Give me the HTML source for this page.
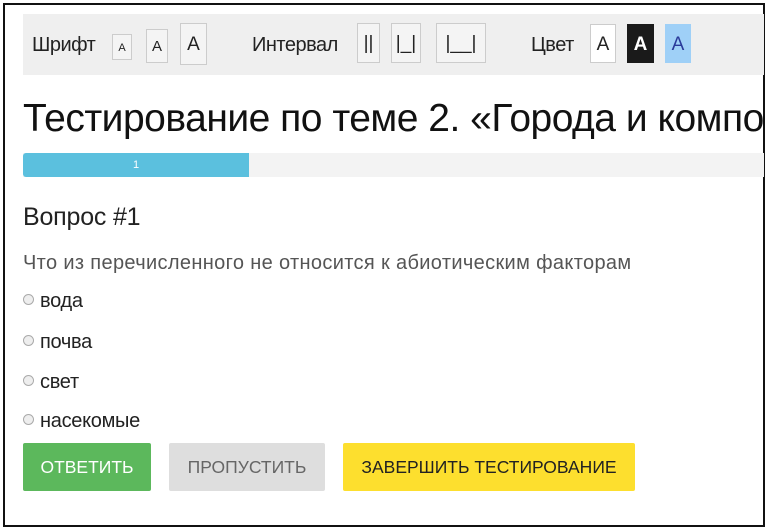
<!DOCTYPE html>
<html><head><meta charset="utf-8"><style>
*{margin:0;padding:0;box-sizing:border-box}
body{width:768px;height:531px;background:#fff;font-family:"Liberation Sans",sans-serif;position:relative;overflow:hidden;color:#222}
.frame{position:absolute;left:3px;top:3px;width:762px;height:524px;border:2px solid #111}
.tb{position:absolute;left:23px;top:14px;width:741px;height:61px;background:#efefef}
.t{position:absolute;font-size:20px;top:34px;letter-spacing:-0.5px;color:#222}
.b{position:absolute;border:1px solid #ccc;background:#f4f4f4;text-align:center;color:#222}
.title{position:absolute;left:23px;top:97px;font-size:39px;white-space:nowrap;letter-spacing:-0.5px;color:#111}
.pb{position:absolute;left:23px;top:153px;width:741px;height:24px;background:#f3f3f3}
.pf{position:absolute;left:23px;top:153px;width:226px;height:24px;background:#5bc0de;color:#fff;font-size:11px;text-align:center;line-height:24px;border-radius:3px 0 0 3px}
.q{position:absolute;left:23px;top:203px;font-size:25px;letter-spacing:-0.2px}
.d{position:absolute;left:23px;top:252px;font-size:20px;color:#555;letter-spacing:0.35px}
.o{position:absolute;left:23px;font-size:20px;letter-spacing:-0.3px;color:#222}
.o i{display:inline-block;width:11px;height:11px;border:1px solid #aaa;border-radius:50%;background:#eee;margin-right:6px;vertical-align:2px}
.btn{position:absolute;top:443px;height:48px;line-height:48px;font-size:17.5px;text-align:center;border-radius:2px;letter-spacing:0}
</style></head><body>
<div class="frame"></div>
<div class="tb"></div>
<div class="t" style="left:32px">Шрифт</div>
<div class="b" style="left:112px;top:34px;width:20px;height:26px;font-size:11px;line-height:26px">А</div>
<div class="b" style="left:146px;top:29px;width:22px;height:34px;font-size:15px;line-height:34px">А</div>
<div class="b" style="left:180px;top:23px;width:27px;height:42px;font-size:19px;line-height:42px">А</div>
<div class="t" style="left:252px">Интервал</div>
<div class="b" style="left:357px;top:23px;width:23px;height:40px;font-size:19px;line-height:40px">||</div>
<div class="b" style="left:391px;top:23px;width:30px;height:40px;font-size:19px;line-height:40px">|_|</div>
<div class="b" style="left:436px;top:23px;width:50px;height:40px;font-size:19px;line-height:40px">|__|</div>
<div class="t" style="left:531px">Цвет</div>
<div class="b" style="left:590px;top:24px;width:26px;height:39px;background:#fff;font-size:19px;line-height:39px">А</div>
<div class="b" style="left:627px;top:24px;width:27px;height:39px;background:#1a1a1a;border-color:#1a1a1a;color:#fff;font-weight:bold;font-size:19px;line-height:39px">А</div>
<div class="b" style="left:665px;top:24px;width:26px;height:39px;background:#9fd0f7;border-color:#9fd0f7;color:#2a3a9a;font-size:19px;line-height:39px">А</div>
<div class="title">Тестирование по теме 2. «Города и компо</div>
<div class="pb"></div><div class="pf">1</div>
<div class="q">Вопрос #1</div>
<div class="d">Что из перечисленного не относится к абиотическим факторам</div>
<div class="o" style="top:290px"><i></i>вода</div>
<div class="o" style="top:331px"><i></i>почва</div>
<div class="o" style="top:371px"><i></i>свет</div>
<div class="o" style="top:410px"><i></i>насекомые</div>
<div class="btn" style="left:23px;width:128px;background:#5cb85c;color:#fff">ОТВЕТИТЬ</div>
<div class="btn" style="left:169px;width:156px;background:#dedede;color:#666">ПРОПУСТИТЬ</div>
<div class="btn" style="left:343px;width:292px;background:#fddf2e;color:#222">ЗАВЕРШИТЬ ТЕСТИРОВАНИЕ</div>
</body></html>
